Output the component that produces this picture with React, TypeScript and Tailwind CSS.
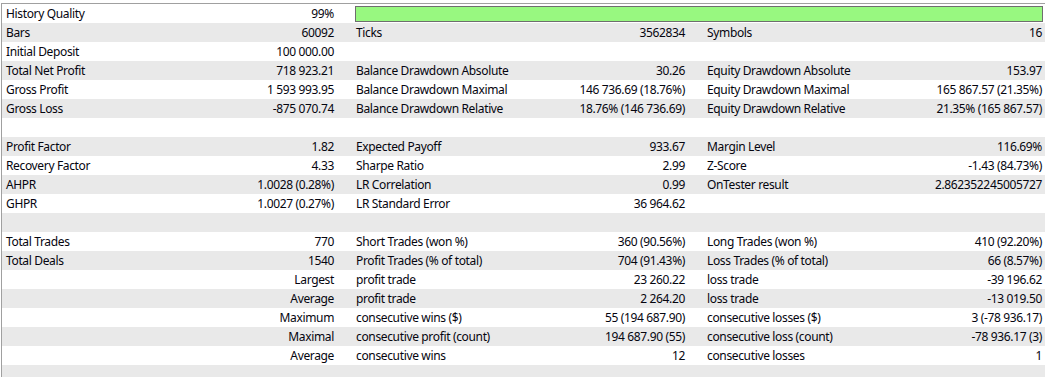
/**
 * Strategy tester report: summary statistics grid
 */

type Row = [string, string, string, string, string, string] | null;

const rows: Row[] = [
  ['History Quality', '99%', '', '', '', ''],
  ['Bars', '60092', 'Ticks', '3562834', 'Symbols', '16'],
  ['Initial Deposit', '100 000.00', '', '', '', ''],
  ['Total Net Profit', '718 923.21', 'Balance Drawdown Absolute', '30.26', 'Equity Drawdown Absolute', '153.97'],
  ['Gross Profit', '1 593 993.95', 'Balance Drawdown Maximal', '146 736.69 (18.76%)', 'Equity Drawdown Maximal', '165 867.57 (21.35%)'],
  ['Gross Loss', '-875 070.74', 'Balance Drawdown Relative', '18.76% (146 736.69)', 'Equity Drawdown Relative', '21.35% (165 867.57)'],
  null,
  ['Profit Factor', '1.82', 'Expected Payoff', '933.67', 'Margin Level', '116.69%'],
  ['Recovery Factor', '4.33', 'Sharpe Ratio', '2.99', 'Z-Score', '-1.43 (84.73%)'],
  ['AHPR', '1.0028 (0.28%)', 'LR Correlation', '0.99', 'OnTester result', '2.862352245005727'],
  ['GHPR', '1.0027 (0.27%)', 'LR Standard Error', '36 964.62', '', ''],
  null,
  ['Total Trades', '770', 'Short Trades (won %)', '360 (90.56%)', 'Long Trades (won %)', '410 (92.20%)'],
  ['Total Deals', '1540', 'Profit Trades (% of total)', '704 (91.43%)', 'Loss Trades (% of total)', '66 (8.57%)'],
  ['', 'Largest', 'profit trade', '23 260.22', 'loss trade', '-39 196.62'],
  ['', 'Average', 'profit trade', '2 264.20', 'loss trade', '-13 019.50'],
  ['', 'Maximum', 'consecutive wins ($)', '55 (194 687.90)', 'consecutive losses ($)', '3 (-78 936.17)'],
  ['', 'Maximal', 'consecutive profit (count)', '194 687.90 (55)', 'consecutive loss (count)', '-78 936.17 (3)'],
  ['', 'Average', 'consecutive wins', '12', 'consecutive losses', '1'],
  null,
];

export default function App() {
  return (
    <div
      className="h-[377px] w-[1052px] overflow-hidden bg-white pl-[1px] pt-[3px] text-[12px] tracking-[-0.35px] text-[#05050f]"
      style={{ fontFamily: '"Noto Sans", "Liberation Sans", sans-serif' }}
    >
      <div className="w-[1044px] border-l border-t border-[#a0a0a0]">
        {rows.map((row, i) => {
          const bg = i % 2 === 1 ? 'bg-[#e9e9e9]' : 'bg-white';
          if (!row) return <div key={i} className={`h-[19px] ${bg}`} />;
          return (
            <div key={i} className={`flex h-[19px] items-center leading-[19px] ${bg}`}>
              <div className="flex w-[349px] justify-between pl-[4px] pr-[17px]">
                <span className="whitespace-nowrap">{row[0]}</span>
                <span className="whitespace-nowrap">{row[1]}</span>
              </div>
              {i === 0 ? (
                <div className="ml-[4px] h-[16px] w-[688px] border border-[#6e6e6e] bg-[#98f880]" />
              ) : (
                <>
                  <div className="flex w-[351px] justify-between pl-[5px] pr-[17px]">
                    <span className="whitespace-nowrap">{row[2]}</span>
                    <span className="whitespace-nowrap">{row[3]}</span>
                  </div>
                  <div className="flex w-[343px] justify-between pl-[5px] pr-[3px]">
                    <span className="whitespace-nowrap">{row[4]}</span>
                    <span className="whitespace-nowrap">{row[5]}</span>
                  </div>
                </>
              )}
            </div>
          );
        })}
      </div>
    </div>
  );
}
